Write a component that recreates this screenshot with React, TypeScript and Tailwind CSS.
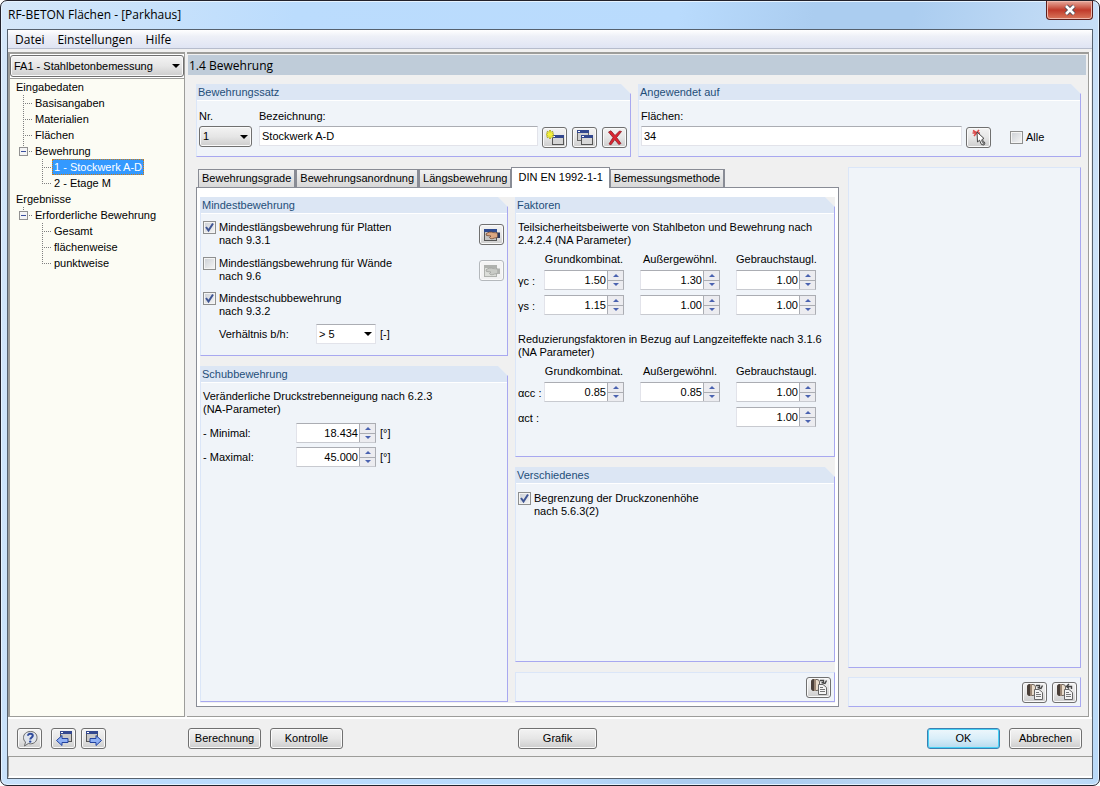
import { useState } from "react";
import type { ReactNode } from "react";

type Guide = "none" | "tee" | "end" | "box";

const TREE: { label: string; guides: Guide[] }[] = [
  { label: "Eingabedaten", guides: [] },
  { label: "Basisangaben", guides: ["tee"] },
  { label: "Materialien", guides: ["tee"] },
  { label: "Flächen", guides: ["tee"] },
  { label: "Bewehrung", guides: ["box"] },
  { label: "1 - Stockwerk A-D", guides: ["none", "tee"] },
  { label: "2 - Etage M", guides: ["none", "end"] },
  { label: "Ergebnisse", guides: [] },
  { label: "Erforderliche Bewehrung", guides: ["box"] },
  { label: "Gesamt", guides: ["none", "tee"] },
  { label: "flächenweise", guides: ["none", "tee"] },
  { label: "punktweise", guides: ["none", "end"] },
];

const TABS = ["Bewehrungsgrade", "Bewehrungsanordnung", "Längsbewehrung", "DIN EN 1992-1-1", "Bemessungsmethode"];

const buttonFace =
  "rounded-[3px] border border-[#707070] bg-linear-to-b from-[#f3f3f3] from-0% via-[#e6e6e6] via-50% to-[#cdcdcd] to-100% shadow-[inset_0_0_0_1px_#fafafa]";

function TreeGuide({ kind }: { kind: Guide }) {
  return (
    <svg width="19" height="16" viewBox="0 0 19 16" className="shrink-0" shapeRendering="crispEdges" fill="none">
      {kind !== "none" && (
        <>
          <path d={kind === "tee" ? "M7.5 0V16" : "M7.5 0V8"} stroke="#808080" strokeDasharray="1 1" />
          <path d="M7 8.5H16" stroke="#808080" strokeDasharray="1 1" />
        </>
      )}
      {kind === "box" && (
        <>
          <rect x="3.5" y="4.5" width="8" height="8" fill="#f4f4f4" stroke="#919191" />
          <path d="M5 8.5H10" stroke="#3a4f9e" />
        </>
      )}
    </svg>
  );
}

function Arrow() {
  return (
    <svg
      width="8"
      height="4"
      viewBox="0 0 8 4"
      className="pointer-events-none absolute top-1/2 right-1 -translate-y-1/2"
    >
      <path d="M0 0H8L4 4Z" fill="#000" />
    </svg>
  );
}

function Group({ title, className, children }: { title: string; className: string; children?: ReactNode }) {
  return (
    <section
      className={`flex flex-col border-r border-b border-l border-r-[#a8a8f0] border-b-[#a8a8f0] border-l-[#dbe6f8] bg-[#f0f4f9] [clip-path:polygon(0_0,calc(100%-10px)_0,100%_10px,100%_100%,0_100%)] ${className}`}
    >
      <h2 className="h-[17px] shrink-0 border-b border-white bg-[#dce6f4] pl-px text-[11px] leading-4 text-[#1f4e79]">
        {title}
      </h2>
      {children}
    </section>
  );
}

function Strip({ className, children }: { className: string; children?: ReactNode }) {
  return (
    <div className={`border border-[#dbe6f8] border-r-[#a8a8f0] border-b-[#a8a8f0] bg-[#f0f4f9] ${className}`}>
      {children}
    </div>
  );
}

function IconButton({ label, disabled, children }: { label: string; disabled?: boolean; children: ReactNode }) {
  return (
    <button
      type="button"
      aria-label={label}
      disabled={disabled}
      className={`flex h-[21px] w-[25px] shrink-0 items-center justify-center ${buttonFace} disabled:border-[#b4b8bc] disabled:from-[#f4f4f4] disabled:via-[#f4f4f4] disabled:to-[#f0f0f0]`}
    >
      {children}
    </button>
  );
}

function CheckBox({ id, checked, children }: { id: string; checked?: boolean; children: ReactNode }) {
  return (
    <div className="flex items-start gap-[3px]">
      <span className="relative flex">
        <input
          id={id}
          type="checkbox"
          defaultChecked={checked}
          className="peer size-[13px] appearance-none border border-[#8e8f8f] bg-linear-to-br from-[#cbcfd5] to-[#f6f6f6] shadow-[inset_0_0_0_1px_#f4f4f4]"
        />
        <svg
          width="13"
          height="13"
          viewBox="0 0 13 13"
          className="pointer-events-none absolute inset-0 hidden peer-checked:block"
        >
          <path d="M3 6L5.5 9.5L10 2.5" fill="none" stroke="#3f5594" strokeWidth="2" />
        </svg>
      </span>
      <label htmlFor={id} className="leading-[13px]">
        {children}
      </label>
    </div>
  );
}

function Spinner({ label, id, value }: { label?: string; id?: string; value: string }) {
  return (
    <div className="flex h-5 w-20 border border-t-[#abadb3] border-r-[#abadb3] border-b-[#c8cad0] border-l-[#e2e3ea] bg-white">
      <input
        id={id}
        aria-label={label}
        defaultValue={value}
        className="w-0 min-w-0 flex-1 bg-white pr-px text-right text-[11px] leading-[18px] outline-none"
      />
      <span className="flex w-4 flex-col border-l border-[#abadb3] bg-white">
        {["M0 3H6L3 0Z", "M0 0H6L3 3Z"].map((d, i) => (
          <button
            key={d}
            type="button"
            aria-label={i === 0 ? "Erhöhen" : "Verringern"}
            className="flex flex-1 items-center justify-center border-b border-[#abadb3] bg-[#ececf0] last:border-b-0"
          >
            <svg width="6" height="3" viewBox="0 0 6 3">
              <path d={d} fill="#4a62b0" />
            </svg>
          </button>
        ))}
      </span>
    </div>
  );
}

function Symbol({ sign, index }: { sign: string; index: string }) {
  return (
    <span className="self-center pt-0.5 leading-[13px] whitespace-nowrap">
      {sign}
      <span>{index}</span> :
    </span>
  );
}

function ColumnHeads() {
  return (
    <>
      <span />
      {["Grundkombinat.", "Außergewöhnl.", "Gebrauchstaugl."].map((head) => (
        <span key={head} className="w-20 text-center leading-3 whitespace-nowrap">
          {head}
        </span>
      ))}
    </>
  );
}

function NewWindowIcon() {
  return (
    <svg width="20" height="18" viewBox="0 0 20 18">
      <rect x="7.5" y="6.5" width="11" height="9" fill="#d5d5d5" stroke="#555" />
      <rect x="7" y="6" width="12" height="3" fill="#33488f" />
      <rect x="8" y="7" width="2" height="1" fill="#fff" />
      <path d="M5 1V10M1 5.5H9M2 2.5L8 8.5M8 2.5L2 8.5" stroke="#9a9a30" strokeWidth="2" />
      <path d="M5 1.5V9.5M1.5 5.5H8.5M2.5 3L7.5 8M7.5 3L2.5 8" stroke="#f4f03a" strokeWidth="1.4" />
    </svg>
  );
}

function CopyWindowIcon() {
  return (
    <svg width="20" height="18" viewBox="0 0 20 18">
      <rect x="2.5" y="1.5" width="11" height="10" fill="#d0d0d0" stroke="#666" />
      <rect x="2" y="1" width="12" height="3" fill="#33488f" />
      <rect x="3" y="2" width="2" height="1" fill="#fff" />
      <rect x="6.5" y="6.5" width="11" height="9" fill="#d8d8d8" stroke="#555" />
      <rect x="6" y="6" width="12" height="3" fill="#33488f" />
      <rect x="7" y="7" width="2" height="1" fill="#fff" />
    </svg>
  );
}

function DeleteIcon() {
  return (
    <svg width="18" height="18" viewBox="0 0 18 18">
      <path
        d="M2.5 3L5 1.8L9 6.5L13.5 2L15.5 2.5L10.6 8.5L15 14.5L12.8 15.5L8.8 10.6L5 15.8L3 15L7 8.5Z"
        fill="#dd2430"
        stroke="#8c1c24"
        strokeWidth="0.8"
        strokeLinejoin="round"
      />
    </svg>
  );
}

function PickIcon() {
  return (
    <svg width="18" height="18" viewBox="0 0 18 18">
      <path d="M3 1.5L9 5.5M9 1L4 7M2.5 4H10" stroke="#dd4a4a" strokeWidth="1.6" />
      <path d="M7 3L7.5 13L9.5 11.2L11.5 15.5L14 16L15 14L12 10.5L14 9.5Z" fill="#fff" stroke="#444" strokeLinejoin="round" />
      <path d="M11.5 11L14 15" stroke="#777" strokeWidth="1.6" />
    </svg>
  );
}

function HandIcon({ muted }: { muted?: boolean }) {
  return (
    <svg width="20" height="18" viewBox="0 0 20 18">
      <rect x="2.5" y="3.5" width="12" height="11" fill={muted ? "#dcded9" : "#c4c4c4"} stroke={muted ? "#b0b2ae" : "#555"} />
      <rect x="2" y="3" width="13" height="3" fill={muted ? "#b0b2ae" : "#2d4a90"} />
      <path
        d="M4 8C6 6 9 5.5 11 6.5L16 7V11.5L12.5 12C10 13.2 8 12.8 7.5 11.5L9 10L4.5 9.5Z"
        fill={muted ? "#c9cbc6" : "#dba782"}
        stroke={muted ? "#9fa19d" : "#6e4634"}
        strokeWidth="0.8"
      />
      <path d="M15.5 6.5H18V12H15.5Z" fill={muted ? "#b0b2ae" : "#2f3a5e"} />
    </svg>
  );
}

function LibraryIcon({ load }: { load?: boolean }) {
  return (
    <svg width="20" height="18" viewBox="0 0 20 18">
      <rect x="2.5" y="1.5" width="8" height="11" rx="2.5" fill="#e9dccb" stroke="#6b6560" />
      <path d="M2 4C2 2 3 1 5 1V13C3 13 2 12 2 10Z" fill="#4a3f38" />
      <path d="M5 1H7V13H5Z" fill="#9a8674" />
      <path d="M9.5 6.5H14L17.5 9.5V16.5H9.5Z" fill="#f4f4f4" stroke="#666" />
      <path d="M11 9.5H14M11 11.5H16M11 13.5H16" stroke="#777" />
      {load ? (
        <path d="M16.5 6V3.5H12M14 1L11.5 3.5L14 5.5" fill="none" stroke="#444" strokeWidth="1.4" />
      ) : (
        <path d="M11 2.5H14.5V5M12.5 4.5L16 5.5L17.5 2.5" fill="none" stroke="#444" strokeWidth="1.4" />
      )}
    </svg>
  );
}

function HelpIcon() {
  return (
    <svg width="18" height="18" viewBox="0 0 18 18">
      <path
        d="M9.5 1.5C13.5 1.5 16 4 16 7.5C16 11 13.5 13.8 9.5 13.8C8.8 13.8 8 13.7 7.3 13.5L3.5 16L4.5 12C3 10.8 2.5 9.3 2.5 7.5C2.5 4 5.5 1.5 9.5 1.5Z"
        fill="#dfe4ec"
        stroke="#6a6a6a"
      />
      <path
        d="M7 5.8C7 4.3 8 3.8 9.3 3.8C10.8 3.8 11.8 4.5 11.8 5.8C11.8 7.4 9.3 7.6 9.3 9.4"
        fill="none"
        stroke="#2f4a9c"
        strokeWidth="2"
      />
      <circle cx="9.2" cy="11.6" r="1.2" fill="#2f4a9c" />
    </svg>
  );
}

function PageIcon({ forward }: { forward?: boolean }) {
  return (
    <svg width="20" height="18" viewBox="0 0 20 18">
      <rect x={forward ? 2.5 : 6.5} y="1.5" width="11" height="10" fill="#c8c8c8" stroke="#555" />
      <rect x={forward ? 2 : 6} y="1" width="12" height="3" fill="#33488f" />
      <rect x={forward ? 3 : 7} y="2" width="2" height="1" fill="#fff" />
      <path
        d={forward ? "M6 8.5H12V5.5L17.5 10.5L12 15.5V12.5H6Z" : "M14 8.5H8V5.5L2.5 10.5L8 15.5V12.5H14Z"}
        fill="#8fb0f4"
        stroke="#2343a0"
      />
    </svg>
  );
}

function MainArea() {
  const [tab, setTab] = useState(3);

  return (
    <main className="ml-0.5 flex min-w-0 flex-1 flex-col border-t-2 border-r border-b border-[#9d9d9a] bg-[#f0f0f0] pt-px shadow-[1px_1px_0_1px_#fff]">
      <h1 className="mr-0.5 ml-px h-5 bg-[#bfccd9] pl-px font-['Open_Sans','Noto_Sans',sans-serif] text-[12px] leading-[22px]">
        1.4 Bewehrung
      </h1>

      <div className="flex flex-1 flex-col gap-[10px] pt-[9px] pr-[7px] pb-[9px] pl-[9px]">
        <div className="grid grid-cols-[435fr_443fr] gap-[7px]">
          <Group title="Bewehrungssatz" className="h-[73px]">
            <div className="grid grid-cols-[56px_1fr_auto] gap-x-1 gap-y-[3px] pt-[9px] pr-[3px] pl-0.5">
              <label htmlFor="nr" className="leading-[13px]">
                Nr.
              </label>
              <label htmlFor="bezeichnung" className="leading-[13px]">
                Bezeichnung:
              </label>
              <span />
              <span className="relative flex w-[53px]">
                <select id="nr" className={`h-[21px] w-full appearance-none pl-[3px] ${buttonFace}`}>
                  <option>1</option>
                  <option>2</option>
                </select>
                <Arrow />
              </span>
              <input
                id="bezeichnung"
                defaultValue="Stockwerk A-D"
                className="h-5 min-w-0 border border-[#e2e3ea] border-t-[#abadb3] bg-white pl-0.5 outline-none"
              />
              <span className="flex gap-[5px] pt-px">
                <IconButton label="Neu">
                  <NewWindowIcon />
                </IconButton>
                <IconButton label="Kopieren">
                  <CopyWindowIcon />
                </IconButton>
                <IconButton label="Löschen">
                  <DeleteIcon />
                </IconButton>
              </span>
            </div>
          </Group>

          <Group title="Angewendet auf" className="h-[73px]">
            <div className="grid grid-cols-[1fr_auto_85px] gap-x-1 gap-y-[3px] pt-[9px] pl-0.5">
              <label htmlFor="flaechen" className="col-span-3 leading-[13px]">
                Flächen:
              </label>
              <input
                id="flaechen"
                defaultValue="34"
                className="h-5 min-w-0 border border-[#e2e3ea] border-t-[#abadb3] bg-white pl-0.5 outline-none"
              />
              <span className="pt-px">
                <IconButton label="Flächen wählen">
                  <PickIcon />
                </IconButton>
              </span>
              <div className="pt-[5px] pl-[15px]">
                <CheckBox id="alle">Alle</CheckBox>
              </div>
            </div>
          </Group>
        </div>

        <div className="grid flex-1 grid-cols-[643fr_233fr] gap-[9px]">
          <div className="flex flex-col">
            <div role="tablist" className="relative flex h-5 items-end pl-0.5">
              {TABS.map((label, i) => (
                <button
                  key={label}
                  type="button"
                  role="tab"
                  aria-selected={i === tab}
                  onClick={() => setTab(i)}
                  className={
                    i === tab
                      ? "z-10 -mb-px -ml-px h-[21px] border border-b-0 border-[#898c95] bg-white px-[6px] pb-0.5 whitespace-nowrap"
                      : "h-[18px] border border-r-2 border-b-0 border-[#898c95] bg-linear-to-b from-[#f2f2f2] to-[#d8d8d8] px-[3px] whitespace-nowrap"
                  }
                >
                  {label}
                </button>
              ))}
            </div>

            <div
              role="tabpanel"
              className="grid flex-1 grid-cols-[308fr_320fr] gap-[7px] border border-[#898c95] bg-[#f0f0f0] px-[3px] pt-[9px] pb-1 shadow-[inset_0_9px_0_#fff,inset_3px_-3px_0_#fff,inset_-3px_0_0_#fff]"
            >
              <div className="flex flex-col gap-[10px]">
                <Group title="Mindestbewehrung" className="h-[159px]">
                  <div className="pt-[7px] pr-[3px] pl-0.5">
                    <div className="flex h-9 justify-between">
                      <CheckBox id="platten" checked>
                        Mindestlängsbewehrung für Platten
                        <br />
                        nach 9.3.1
                      </CheckBox>
                      <span className="pt-[3px]">
                        <IconButton label="Platten bearbeiten">
                          <HandIcon />
                        </IconButton>
                      </span>
                    </div>
                    <div className="flex h-[35px] justify-between">
                      <CheckBox id="waende">
                        Mindestlängsbewehrung für Wände
                        <br />
                        nach 9.6
                      </CheckBox>
                      <span className="pt-[3px]">
                        <IconButton label="Wände bearbeiten" disabled>
                          <HandIcon muted />
                        </IconButton>
                      </span>
                    </div>
                    <CheckBox id="schub" checked>
                      Mindestschubbewehrung
                      <br />
                      nach 9.3.2
                    </CheckBox>
                    <div className="mt-[6px] flex items-center pl-4">
                      <label htmlFor="verhaeltnis" className="w-[97px]">
                        Verhältnis b/h:
                      </label>
                      <span className="relative flex w-[60px]">
                        <select
                          id="verhaeltnis"
                          className="h-5 w-full appearance-none border border-[#e2e3ea] border-t-[#abadb3] bg-white pl-0.5"
                        >
                          <option>&gt; 5</option>
                          <option>&lt; 4</option>
                        </select>
                        <Arrow />
                      </span>
                      <span className="pl-1">[-]</span>
                    </div>
                  </div>
                </Group>

                <Group title="Schubbewehrung" className="flex-1">
                  <p className="pt-[7px] pl-0.5 leading-[13px]">
                    Veränderliche Druckstrebenneigung nach 6.2.3
                    <br />
                    (NA-Parameter)
                  </p>
                  <div className="mt-[7px] grid grid-cols-[93px_80px_1fr] items-center gap-y-1 pl-0.5">
                    <label htmlFor="minimal">- Minimal:</label>
                    <Spinner id="minimal" value="18.434" />
                    <span className="pl-1">[°]</span>
                    <label htmlFor="maximal">- Maximal:</label>
                    <Spinner id="maximal" value="45.000" />
                    <span className="pl-1">[°]</span>
                  </div>
                </Group>
              </div>

              <div className="flex flex-col gap-[10px]">
                <Group title="Faktoren" className="h-[260px]">
                  <div className="pt-[7px] pl-0.5">
                    <p className="leading-[13px]">
                      Teilsicherheitsbeiwerte von Stahlbeton und Bewehrung nach
                      <br />
                      2.4.2.4 (NA Parameter)
                    </p>
                    <div className="mt-[6px] grid grid-cols-[26px_96px_96px_80px] gap-y-[5px]">
                      <ColumnHeads />
                      <Symbol sign="γ" index="c" />
                      <Spinner label="γc Grundkombination" value="1.50" />
                      <Spinner label="γc Außergewöhnlich" value="1.30" />
                      <Spinner label="γc Gebrauchstauglichkeit" value="1.00" />
                      <Symbol sign="γ" index="s" />
                      <Spinner label="γs Grundkombination" value="1.15" />
                      <Spinner label="γs Außergewöhnlich" value="1.00" />
                      <Spinner label="γs Gebrauchstauglichkeit" value="1.00" />
                    </div>
                    <p className="mt-[18px] leading-[13px]">
                      Reduzierungsfaktoren in Bezug auf Langzeiteffekte nach 3.1.6
                      <br />
                      (NA Parameter)
                    </p>
                    <div className="mt-[6px] grid grid-cols-[26px_96px_96px_80px] gap-y-[5px]">
                      <ColumnHeads />
                      <Symbol sign="α" index="cc" />
                      <Spinner label="αcc Grundkombination" value="0.85" />
                      <Spinner label="αcc Außergewöhnlich" value="0.85" />
                      <Spinner label="αcc Gebrauchstauglichkeit" value="1.00" />
                      <Symbol sign="α" index="ct" />
                      <span className="col-span-2" />
                      <Spinner label="αct Gebrauchstauglichkeit" value="1.00" />
                    </div>
                  </div>
                </Group>

                <Group title="Verschiedenes" className="flex-1">
                  <div className="pt-2 pl-0.5">
                    <CheckBox id="druckzone" checked>
                      Begrenzung der Druckzonenhöhe
                      <br />
                      nach 5.6.3(2)
                    </CheckBox>
                  </div>
                </Group>

                <Strip className="flex h-[30px] items-center justify-end pr-[3px]">
                  <IconButton label="Standard speichern">
                    <LibraryIcon />
                  </IconButton>
                </Strip>
              </div>
            </div>
          </div>

          <div className="flex flex-col gap-[9px]">
            <Strip className="flex-1" />
            <Strip className="flex h-[30px] items-center justify-end gap-[5px] pr-[3px]">
              <IconButton label="Speichern">
                <LibraryIcon />
              </IconButton>
              <IconButton label="Laden">
                <LibraryIcon load />
              </IconButton>
            </Strip>
          </div>
        </div>
      </div>
    </main>
  );
}

export default function App() {
  const [node, setNode] = useState("1 - Stockwerk A-D");

  return (
    <div className="flex min-h-screen flex-col rounded-[7px] border border-[#22222c] bg-[linear-gradient(100deg,#d5e7f9_0%,#bbdcfd_24%,#b9dbfd_55%,#abcdf0_66%,#abcdf0_74%,#cde2f8_92%,#b9d9f8_100%)] px-[6px] pb-[6px] font-['Liberation_Sans',Arial,sans-serif] text-[11px] text-black shadow-[inset_0_0_0_1px_#e6f3ff]">
      <header className="flex h-7 items-start justify-between pl-px">
        <span className="pt-[5px] font-['Open_Sans','Noto_Sans',sans-serif] text-[12px] leading-[18px]">
          RF-BETON Flächen - [Parkhaus]
        </span>
        <button
          type="button"
          aria-label="Schließen"
          className="flex h-[19px] w-[47px] items-center justify-center rounded-b-[4px] border border-t-0 border-[#5c1f1c] bg-linear-to-b from-[#e6a89c] from-0% via-[#c0392a] via-50% to-[#d9765c] to-100% shadow-[inset_0_0_0_1px_#f0b8ac]"
        >
          <svg width="14" height="12" viewBox="0 0 14 12">
            <path d="M3 2L11 10M11 2L3 10" stroke="#4a4a58" strokeWidth="4.5" />
            <path d="M3 2L11 10M11 2L3 10" stroke="#fff" strokeWidth="2.6" />
          </svg>
        </button>
      </header>

      <div className="flex flex-1 flex-col border border-[#56616e] bg-[#f0f0f0]">
        <nav className="flex h-[19px] items-end gap-[13px] border-b border-[#b6bccc] bg-linear-to-b from-white from-0% via-[#eef0f7] via-35% to-[#dfe4f3] to-100% pl-[7px] font-['Open_Sans','Noto_Sans',sans-serif] text-[12px] leading-4">
          <button type="button">Datei</button>
          <button type="button">Einstellungen</button>
          <button type="button">Hilfe</button>
        </nav>

        <div className="flex flex-1 border-b-2 border-white pt-[3px] pr-[3px]">
          <aside className="flex w-[177px] shrink-0 flex-col border-t-2 border-r border-b border-l-2 border-[#9d9d9a] bg-white pt-px">
            <span className="relative flex">
              <select aria-label="Bemessungsfall" className={`h-[22px] w-full appearance-none pl-[3px] ${buttonFace}`}>
                <option>FA1 - Stahlbetonbemessung</option>
              </select>
              <Arrow />
            </span>
            <ul className="mt-px flex-1 border-t border-[#9d9d9a] bg-[#fcfcf4] pl-[6px]">
              {TREE.map(({ label, guides }) => (
                <li key={label} className="flex h-4">
                  {guides.map((kind, i) => (
                    <TreeGuide key={i} kind={kind} />
                  ))}
                  <button
                    type="button"
                    onClick={() => setNode(label)}
                    className={
                      label === node
                        ? "-ml-0.5 border border-dotted border-[#d07a10] bg-[#3399ff] px-px leading-[14px] whitespace-nowrap text-white"
                        : "leading-4 whitespace-nowrap"
                    }
                  >
                    {label}
                  </button>
                </li>
              ))}
            </ul>
          </aside>
          <MainArea />
        </div>

        <footer className="flex h-[37px] items-start justify-between pt-[9px] pr-[10px] pl-[9px]">
          <div className="flex">
            <div className="flex w-[171px] gap-[5px]">
              <span className="mr-1">
                <IconButton label="Hilfe">
                  <HelpIcon />
                </IconButton>
              </span>
              <IconButton label="Zurück">
                <PageIcon />
              </IconButton>
              <IconButton label="Weiter">
                <PageIcon forward />
              </IconButton>
            </div>
            <div className="flex gap-[9px]">
              <button type="button" className={`h-[21px] w-[73px] ${buttonFace}`}>
                Berechnung
              </button>
              <button type="button" className={`h-[21px] w-[73px] ${buttonFace}`}>
                Kontrolle
              </button>
            </div>
          </div>
          <button type="button" className={`mr-[155px] h-[21px] w-[79px] ${buttonFace}`}>
            Grafik
          </button>
          <div className="flex gap-[9px]">
            <button
              type="button"
              className="h-[21px] w-[73px] rounded-[3px] border border-[#3c7fb1] bg-linear-to-b from-[#eef7fc] from-0% via-[#d9eef9] via-50% to-[#b6daee] to-100% shadow-[inset_0_0_0_1px_#46d1f5]"
            >
              OK
            </button>
            <button type="button" className={`h-[21px] w-[73px] ${buttonFace}`}>
              Abbrechen
            </button>
          </div>
        </footer>
        <div role="status" className="h-[22px] border-t border-b-2 border-l border-t-[#9d9d9a] border-b-white border-l-[#9d9d9a]" />
      </div>
    </div>
  );
}
